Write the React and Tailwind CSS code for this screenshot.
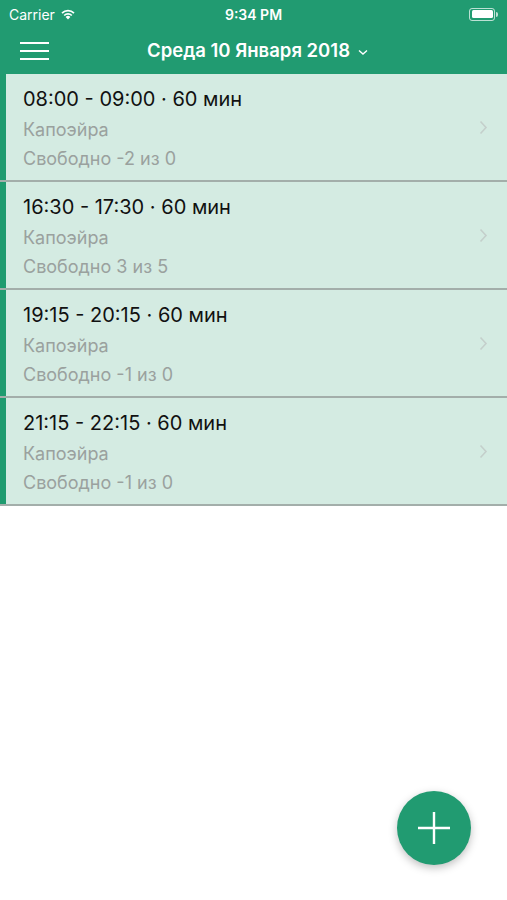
import React from "react";

const SESSIONS = [
  { time: "08:00 - 09:00 · 60 мин", title: "Капоэйра", free: "Свободно -2 из 0" },
  { time: "16:30 - 17:30 · 60 мин", title: "Капоэйра", free: "Свободно 3 из 5" },
  { time: "19:15 - 20:15 · 60 мин", title: "Капоэйра", free: "Свободно -1 из 0" },
  { time: "21:15 - 22:15 · 60 мин", title: "Капоэйра", free: "Свободно -1 из 0" },
];

const StatusBar = () => (
  <div className="relative h-[28px] flex items-center px-[9px] text-white text-[14px]">
    <div className="flex items-center gap-[5px]">
      <span>Carrier</span>
      <svg width="16" height="12" viewBox="0 0 16 12">
        <path d="M8 11.5 L5.6 8.9 A3.4 3.4 0 0 1 10.4 8.9 Z" fill="white" />
        <path d="M3.6 6.9 A6.2 6.2 0 0 1 12.4 6.9 L11.2 8.1 A4.5 4.5 0 0 0 4.8 8.1 Z" fill="white" />
        <path d="M1.4 4.6 A9.3 9.3 0 0 1 14.6 4.6 L13.4 5.8 A7.6 7.6 0 0 0 2.6 5.8 Z" fill="white" />
      </svg>
    </div>
    <div className="absolute left-0 right-0 text-center font-semibold pointer-events-none">9:34 PM</div>
    <div className="ml-auto flex items-center">
      <div className="w-[26px] h-[13px] rounded-[3px] border border-white/70 p-[1.5px]">
        <div className="w-full h-full bg-white rounded-[1.5px]" />
      </div>
      <div className="w-[2px] h-[5px] bg-white/70 rounded-r-sm ml-[1px]" />
    </div>
  </div>
);

const NavBar = () => (
  <div className="relative h-[46px] flex items-center px-[20px]">
    <div className="flex flex-col gap-[6px]">
      <div className="w-[29px] h-[2px] bg-white" />
      <div className="w-[29px] h-[2px] bg-white" />
      <div className="w-[29px] h-[2px] bg-white" />
    </div>
    <div className="absolute inset-0 flex items-center justify-center text-white text-[18.5px] font-semibold pl-[8px]">
      <span>Среда 10 Января 2018</span>
      <svg width="10" height="7" viewBox="0 0 10 7" className="ml-[8px] mt-[2px]">
        <path d="M1 1.5 L5 5 L9 1.5" stroke="white" strokeWidth="1.4" fill="none" />
      </svg>
    </div>
  </div>
);

const SessionRow = ({ item }) => (
  <div className="flex h-[108px] bg-[#d4ebe2] border-b-2 border-[#a3aeaa]">
    <div className="w-[6px] bg-[#1f9b6f]" />
    <div className="flex-1 pl-[17px] pt-[13px] flex flex-col">
      <div className="text-[20px] leading-[24px] text-[#111]">{item.time}</div>
      <div className="text-[18px] leading-[21px] text-[#9aa19e] mt-[8px]">{item.title}</div>
      <div className="text-[18px] leading-[21px] text-[#9aa19e] mt-[8px]">{item.free}</div>
    </div>
    <div className="flex items-center pr-[19px]">
      <svg width="9" height="15" viewBox="0 0 9 15">
        <path d="M1.5 1.5 L7 7.5 L1.5 13.5" stroke="#c4cfcb" strokeWidth="1.6" fill="none" />
      </svg>
    </div>
  </div>
);

const App = () => {
  return (
    <div className="relative w-[507px] h-[900px] bg-white overflow-hidden" style={{ fontFamily: "Inter, 'Noto Sans', sans-serif" }}>
      <div className="bg-[#219b71]">
        <StatusBar />
        <NavBar />
      </div>

      <div className="flex flex-col">
        {SESSIONS.map((s, i) => (
          <SessionRow key={i} item={s} />
        ))}
      </div>

      {/* FAB */}
      <button className="absolute left-[397px] top-[791px] w-[74px] h-[74px] rounded-full bg-[#219b71] shadow-[0_3px_8px_rgba(0,0,0,0.25)] flex items-center justify-center">
        <svg width="34" height="34" viewBox="0 0 34 34">
          <path d="M17 1 V33 M1 17 H33" stroke="white" strokeWidth="2.4" />
        </svg>
      </button>
    </div>
  );
};

export default App;
